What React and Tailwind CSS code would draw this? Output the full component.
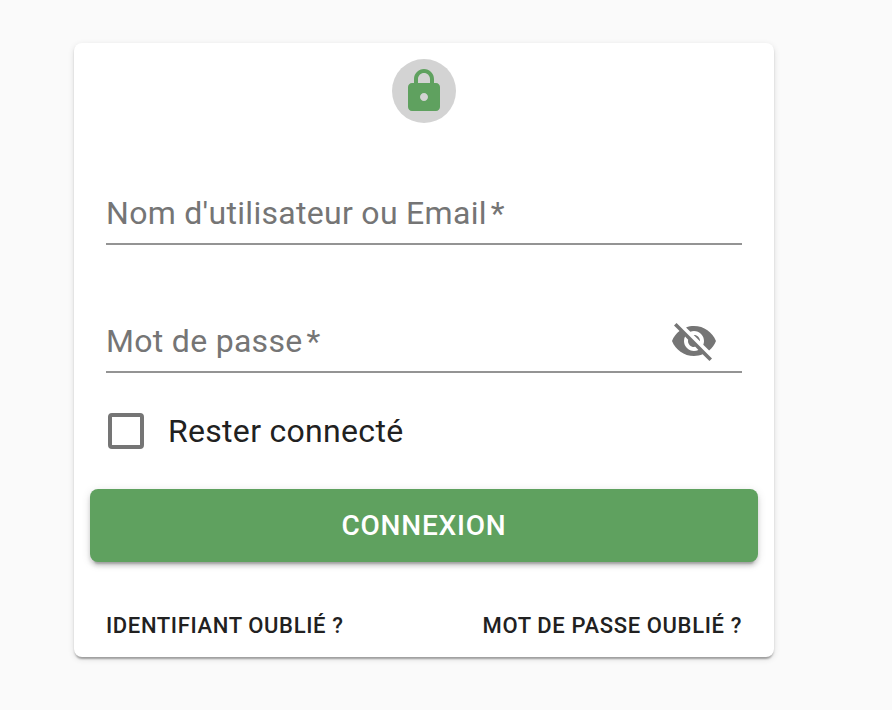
import React from "react";

function Field({ label, children }) {
  return (
    <div className="mx-8 flex h-[128px] items-end justify-between border-b-2 border-[#949494]">
      <label className="mb-3 flex text-[32px] leading-[36px] tracking-[0.3px] text-[#757575]">
        {label}
        <span className="ml-1">*</span>
      </label>
      {children}
    </div>
  );
}

export default function App() {
  return (
    <div className="h-[710px] w-[892px] overflow-hidden bg-[#fafafa] pl-[74px] pt-[43px] font-['Roboto',sans-serif] text-[#212121]">
      <main className="h-[614px] w-[700px] rounded-lg bg-white pt-4 shadow-[0_4px_2px_-2px_rgba(0,0,0,0.2),0_2px_2px_0_rgba(0,0,0,0.14),0_2px_6px_0_rgba(0,0,0,0.12)]">
        <div className="mx-auto flex size-16 items-center justify-center rounded-full bg-[#d3d3d3]">
          <svg viewBox="0 0 24 24" className="size-12 fill-[#5fa15f]">
            <path d="M18 8h-1V6c0-2.76-2.24-5-5-5S7 3.24 7 6v2H6c-1.1 0-2 .9-2 2v10c0 1.1.9 2 2 2h12c1.1 0 2-.9 2-2V10c0-1.1-.9-2-2-2zm-6 9c-1.1 0-2-.9-2-2s.9-2 2-2 2 .9 2 2-.9 2-2 2zM9 8V6c0-1.66 1.34-3 3-3s3 1.34 3 3v2H9z" />
          </svg>
        </div>
        <div className="-mt-[6px]">
          <Field label="Nom d'utilisateur ou Email" />
          <Field label="Mot de passe">
            <svg viewBox="0 0 24 24" className="mb-[6px] mr-6 size-12 fill-[#757575]">
              <path d="M12 7c2.76 0 5 2.24 5 5 0 .65-.13 1.26-.36 1.83l2.92 2.92c1.51-1.26 2.7-2.89 3.43-4.75-1.73-4.39-6-7.5-11-7.5-1.4 0-2.74.25-3.98.7l2.16 2.16C10.74 7.13 11.35 7 12 7zM2 4.27l2.28 2.28.46.46C3.08 8.3 1.78 10.02 1 12c1.73 4.39 6 7.5 11 7.5 1.55 0 3.03-.3 4.38-.84l.42.42L19.73 22 21 20.73 3.27 3 2 4.27zM7.53 9.8l1.55 1.55c-.05.21-.08.43-.08.65 0 1.66 1.34 3 3 3 .22 0 .44-.03.65-.08l1.55 1.55c-.67.33-1.41.53-2.2.53-2.76 0-5-2.24-5-5 0-.79.2-1.53.53-2.2zm4.31-.78l3.15 3.15.02-.16c0-1.66-1.34-3-3-3l-.17.01z" />
            </svg>
          </Field>
        </div>
        <label className="ml-[34px] mt-10 flex h-9 items-center gap-6 text-[32px] leading-9 tracking-[0.3px]">
          <span className="size-9 rounded-[4px] border-4 border-[#757575]" />
          Rester connecté
        </label>
        <button className="mx-4 mt-10 flex h-[73px] w-[668px] items-center justify-center rounded-lg bg-[#5fa15f] text-[28px] font-medium tracking-[0.8px] text-white shadow-[0_6px_2px_-4px_rgba(0,0,0,0.2),0_4px_4px_0_rgba(0,0,0,0.14),0_2px_10px_0_rgba(0,0,0,0.12)]">
          CONNEXION
        </button>
        <div className="mx-8 mt-[48px] flex justify-between text-[22px] font-medium leading-8 tracking-[0.63px]">
          <a>IDENTIFIANT OUBLIÉ ?</a>
          <a>MOT DE PASSE OUBLIÉ ?</a>
        </div>
      </main>
    </div>
  );
}
